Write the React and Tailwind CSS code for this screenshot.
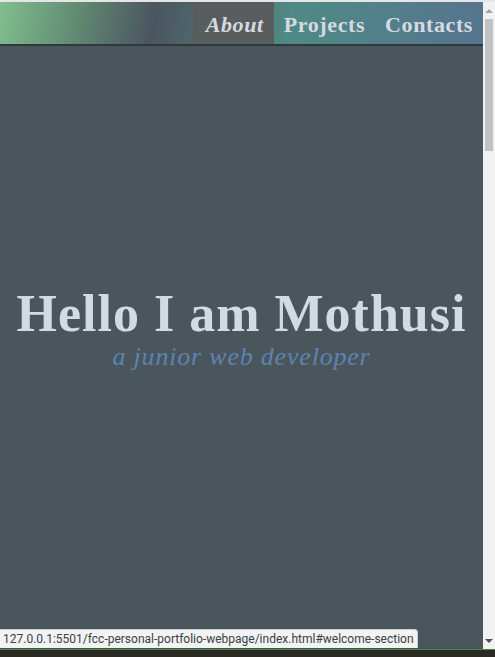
export default function App() {
  return (
    <div className="relative flex h-[657px] w-[495px] flex-col overflow-hidden bg-[#4a565c] font-['Liberation_Serif',serif]">
      <div className="h-[2px] bg-[#e6e6e6]" />
      <div className="flex flex-1">
        {/* page */}
        <div className="flex flex-1 flex-col">
          <nav className="flex h-[42px] justify-end bg-[linear-gradient(100deg,#7fbf8d_0%,#5f8470_18%,#4b5560_32%,#4f6f70_45%,#4f8a85_60%,#56748f_100%)] pt-[3px] text-[22px] font-bold tracking-[0.6px] text-[#d3dbe0] shadow-[0_2px_0_#2e383d]">
            <a className="-mt-[3px] flex items-center bg-[#5a5d5e] pr-[10px] pl-[13px] pt-[3px] italic">About</a>
            <a className="flex items-center px-[10px]">Projects</a>
            <a className="flex items-center px-[10px]">Contacts</a>
          </nav>
          <section className="flex flex-1 flex-col items-center justify-center pb-[34px] text-center">
            <h1 className="text-[52px] leading-[54px] font-bold tracking-[1px] text-[#d2dbe1]">Hello I am Mothusi</h1>
            <p className="text-[26px] leading-[32px] italic tracking-[0.8px] text-[#5d83b1]">a junior web developer</p>
          </section>
        </div>
        {/* scrollbar */}
        <div className="flex w-[12px] flex-col items-center bg-[#f1f1f1]">
          <div className="flex h-[17px] items-center justify-center">
            <div className="h-0 w-0 border-x-[4px] border-b-[4px] border-x-transparent border-b-[#a3a3a3]" />
          </div>
          <div className="h-[132px] w-[8px] bg-[#c1c1c1]" />
          <div className="flex-1" />
          <div className="flex h-[17px] items-center justify-center">
            <div className="h-0 w-0 border-x-[4px] border-t-[4px] border-x-transparent border-t-[#505050]" />
          </div>
        </div>
      </div>
      <div className="h-[8px] border-t border-[#3c8d3c] bg-[#2b2a22]" />
      <div className="absolute bottom-[9px] left-0 rounded-tr-[4px] border-t border-r border-[#d0d0d0] bg-[#f1f3f4] px-[3px] py-[1px] font-['Roboto',sans-serif] text-[12px] leading-[16px] text-[#3c4043]">
        127.0.0.1:5501/fcc-personal-portfolio-webpage/index.html#welcome-section
      </div>
    </div>
  );
}
